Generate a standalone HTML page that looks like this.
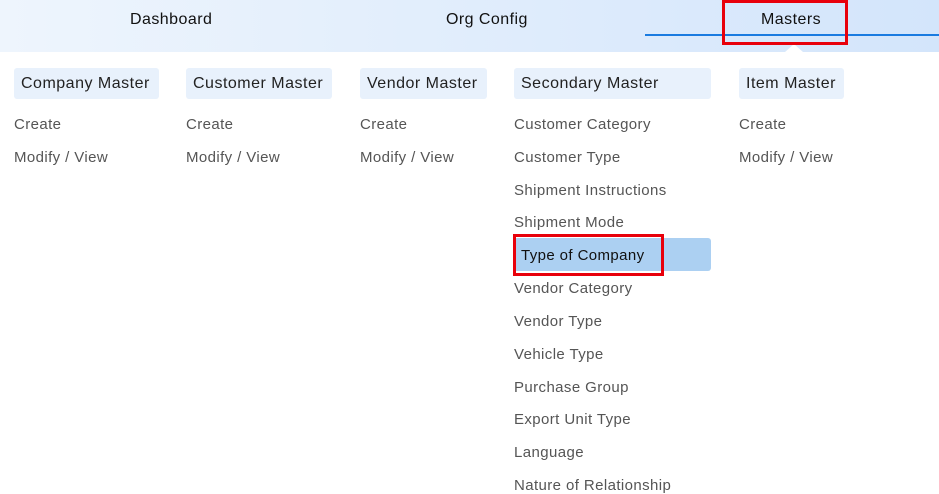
<!DOCTYPE html><html><head><style>
body{margin:0;width:939px;height:494px;overflow:hidden;background:#fff;font-family:"Liberation Sans",sans-serif;position:relative}
.hd{position:absolute;left:0;top:0;width:939px;height:52px;background:linear-gradient(90deg,#eef5fd,#d3e5fb)}
.t{position:absolute;top:11px;font-size:16px;color:#111;letter-spacing:0.45px}
.line{position:absolute;left:645px;top:34px;width:294px;height:2px;background:#1a7be0}
.notch{position:absolute;left:785px;top:44px;width:0;height:0;border-left:9px solid transparent;border-right:9px solid transparent;border-bottom:8px solid #fff}
.red{position:absolute;border:3px solid #e8000b;box-sizing:border-box}
.pill{position:absolute;top:68px;height:31px;line-height:32px;background:#e8f1fc;border-radius:3px;font-size:16px;color:#222;padding:0 7px;box-sizing:border-box;letter-spacing:0.5px;white-space:nowrap}
.i{position:absolute;font-size:15px;color:#555;letter-spacing:0.4px;white-space:nowrap}
</style></head><body>
<div class="hd"></div>
<div class="t" style="left:130px">Dashboard</div>
<div class="t" style="left:446px">Org Config</div>
<div class="t" style="left:761px">Masters</div>
<div class="line"></div><div class="notch"></div>
<div class="red" style="left:722px;top:0;width:126px;height:45px"></div>
<div class="pill" style="left:14px;width:145px">Company Master</div>
<div class="pill" style="left:186px;width:146px">Customer Master</div>
<div class="pill" style="left:360px;width:127px">Vendor Master</div>
<div class="pill" style="left:514px;width:197px">Secondary Master</div>
<div class="pill" style="left:739px;width:105px">Item Master</div>
<div class="i" style="left:14px;top:116px">Create</div>
<div class="i" style="left:14px;top:149px">Modify / View</div>
<div class="i" style="left:186px;top:116px">Create</div>
<div class="i" style="left:186px;top:149px">Modify / View</div>
<div class="i" style="left:360px;top:116px">Create</div>
<div class="i" style="left:360px;top:149px">Modify / View</div>
<div class="i" style="left:739px;top:116px">Create</div>
<div class="i" style="left:739px;top:149px">Modify / View</div>
<div class="i" style="left:514px;top:116px">Customer Category</div>
<div class="i" style="left:514px;top:149px">Customer Type</div>
<div class="i" style="left:514px;top:182px">Shipment Instructions</div>
<div class="i" style="left:514px;top:214px">Shipment Mode</div>
<div style="position:absolute;left:514px;top:238px;width:197px;height:33px;background:#acd0f2;border-radius:3px"></div>
<div class="i" style="left:521px;top:247px;color:#111">Type of Company</div>
<div class="red" style="left:513px;top:234px;width:151px;height:42px"></div>
<div class="i" style="left:514px;top:280px">Vendor Category</div>
<div class="i" style="left:514px;top:313px">Vendor Type</div>
<div class="i" style="left:514px;top:346px">Vehicle Type</div>
<div class="i" style="left:514px;top:379px">Purchase Group</div>
<div class="i" style="left:514px;top:411px">Export Unit Type</div>
<div class="i" style="left:514px;top:444px">Language</div>
<div class="i" style="left:514px;top:477px">Nature of Relationship</div>
</body></html>
